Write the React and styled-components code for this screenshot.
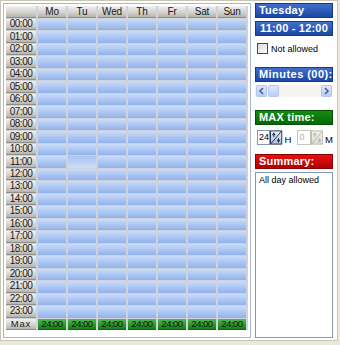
import React from 'react'
import styled, { createGlobalStyle, css } from 'styled-components'

const GlobalStyle = createGlobalStyle`
  * { box-sizing: border-box; }
  html, body { margin: 0; padding: 0; background: #ece9d8; }
  body { font-family: "Liberation Sans", Arial, sans-serif; font-size: 9px; color: #000; }
`

const days = ['Mo', 'Tu', 'Wed', 'Th', 'Fr', 'Sat', 'Sun']
const hours = Array.from({ length: 24 }, (_, i) => String(i).padStart(2, '0') + ':00')

// bar colours for the right hand captions
const tones = {
  blue: css`background: linear-gradient(#3f6fcc, #1c47a2); border-color: #143a8a;`,
  green: css`background: linear-gradient(#128c12, #046804); border-color: #035203;`,
  red: css`background: linear-gradient(#e81010, #b00000); border-color: #8a0000;`,
}

const Frame = styled.div`
  width: 338px;
  height: 341px;
  background: #fff;
  border: 1px solid #c9c6b6;
  padding: 2px;
  display: flex;
  gap: 4px;
`

const GridPanel = styled.div`
  width: 248px;
  border: 1px solid #a7b7cf;
  padding: 2px;
`

const Grid = styled.div`
  display: grid;
  grid-template-columns: 30px repeat(7, 28px);
  grid-template-rows: 12px repeat(25, minmax(0, 1fr));
  column-gap: 2px;
  row-gap: 1px;
  height: 324px;
  background: #cfd2d8;
`

const grayCell = css`
  background: linear-gradient(#f1f1ef, #d2d1cc 60%, #b5b4ae);
  border-bottom: 1px solid #8f8e88;
  color: #1a1a1a;
  display: flex;
  align-items: center;
  justify-content: center;
  line-height: 1;
  white-space: nowrap;
  overflow: hidden;
`

const HeadCell = styled.div`
  ${grayCell}
  font-size: 10px;
  letter-spacing: -0.2px;
`

const TimeCell = styled.div`
  ${grayCell}
  font-size: 10px;
  letter-spacing: -0.5px;
  ${p => p.$max && css`letter-spacing: 0.8px; font-size: 9.5px;`}
`

const Slot = styled.div`
  background: ${p => p.$selected
    ? 'linear-gradient(#a9c3ef, #c3d6f7 70%, #cddef9)'
    : 'linear-gradient(#cbdcfa, #adc7f3 50%, #90b2eb)'};
`

const MaxCell = styled.div`
  background: linear-gradient(#56b856, #2c9a2c 55%, #18801a);
  border-bottom: 1px solid #0c640c;
  color: #0a1a0a;
  display: flex;
  align-items: center;
  justify-content: center;
  line-height: 1;
  font-size: 9.5px;
  letter-spacing: -0.5px;
  overflow: hidden;
`

const Side = styled.div`
  width: 78px;
  display: flex;
  flex-direction: column;
`

const Bar = styled.div`
  height: 15px;
  margin-top: ${p => p.$top || 0}px;
  border: 1px solid;
  ${p => tones[p.$tone || 'blue']}
  color: #fff;
  font-weight: bold;
  font-size: 11px;
  letter-spacing: ${p => p.$wide ? 0.45 : 0.2}px;
  line-height: 13px;
  padding-left: 3px;
  white-space: nowrap;
  overflow: hidden;
  text-align: ${p => (p.$center ? 'center' : 'left')};
  ${p => p.$center && css`padding-left: 0;`}
`

const CheckRow = styled.label`
  display: flex;
  align-items: center;
  gap: 3px;
  margin-top: 6px;
  padding-left: 2px;
  height: 13px;
  font-size: 9px;
`

const CheckBox = styled.span`
  width: 11px;
  height: 11px;
  border: 1px solid #1c5180;
  background: linear-gradient(135deg, #dcdcd6, #fbfbf9);
`

const Scroll = styled.div`
  display: flex;
  height: 12px;
  margin-top: 3px;
  background: #f4f3ee;
  padding: 0 1px;
  gap: 1px;
`

const ScrollBtn = styled.div`
  width: 11px;
  border: 1px solid #b6c8f0;
  border-radius: 2px;
  background: linear-gradient(#dfe8fd, #b9cdf6);
  display: flex;
  align-items: center;
  justify-content: center;
  ${p => p.$push && css`margin-left: auto;`}
`

const SpinRow = styled.div`
  display: flex;
  align-items: center;
  margin-top: 4px;
  padding-left: 2px;
  height: 16px;
`

const SpinInput = styled.div`
  width: 14px;
  height: 15px;
  border: 1px solid ${p => (p.$off ? '#c9c7ba' : '#7f9db9')};
  color: ${p => (p.$off ? '#b0afa8' : '#000')};
  padding-left: 1px;
  line-height: 13px;
  font-size: 9px;
  ${p => p.$gap && css`margin-left: 6px;`}
`

const Unit = styled.span`
  margin-left: 2px;
  margin-top: 5px;
  font-size: 9.5px;
`

const Summary = styled.div`
  flex: 1;
  margin-top: 3px;
  border: 1px solid #7f9db9;
  padding: 2px 3px;
  font-size: 9px;
`

function Arrow({ dir }) {
  return (
    <svg width="7" height="8" viewBox="0 0 7 8">
      <path d={dir === 'left' ? 'M5 1 L2 4 L5 7' : 'M2 1 L5 4 L2 7'} fill="none" stroke="#4d6185" strokeWidth="1.6" />
    </svg>
  )
}

function SpinIcon({ off }) {
  const ink = off ? '#b8b7ae' : '#1e2f4e'
  const id = off ? 'sg0' : 'sg1'
  return (
    <svg width="13" height="15" viewBox="0 0 13 15">
      <defs>
        <linearGradient id={id} x1="0" y1="0" x2="0" y2="1">
          <stop offset="0" stopColor={off ? '#f2f1ec' : '#eef3fb'} />
          <stop offset="1" stopColor={off ? '#dcdbd3' : '#a9bcd9'} />
        </linearGradient>
      </defs>
      <rect x="0.5" y="0.5" width="12" height="14" fill={`url(#${id})`} stroke={ink} />
      <line x1="12" y1="1" x2="1" y2="14" stroke={ink} />
      <path d="M2 5 L4 2 L6 5 Z" fill={ink} />
      <line x1="4" y1="5" x2="4" y2="7" stroke={ink} />
      <path d="M7 10 L9 13 L11 10 Z" fill={ink} />
      <line x1="9" y1="8" x2="9" y2="10" stroke={ink} />
    </svg>
  )
}

export default function App() {
  return (
    <>
      <GlobalStyle />
      <Frame>
        <GridPanel>
          <Grid>
            <HeadCell />
            {days.map(d => <HeadCell key={d}>{d}</HeadCell>)}
            {hours.map((h, r) => (
              <React.Fragment key={h}>
                <TimeCell>{h}</TimeCell>
                {days.map((d, c) => <Slot key={d} $selected={r === 11 && c === 1} />)}
              </React.Fragment>
            ))}
            <TimeCell $max>Max</TimeCell>
            {days.map(d => <MaxCell key={d}>24:00</MaxCell>)}
          </Grid>
        </GridPanel>

        <Side>
          <Bar>Tuesday</Bar>
          <Bar $top={3} $center>11:00 - 12:00</Bar>
          <CheckRow>
            <CheckBox />
            Not allowed
          </CheckRow>
          <Bar $top={12} $wide>Minutes (00):</Bar>
          <Scroll>
            <ScrollBtn><Arrow dir="left" /></ScrollBtn>
            <ScrollBtn />
            <ScrollBtn $push><Arrow dir="right" /></ScrollBtn>
          </Scroll>
          <Bar $top={13} $tone="green">MAX time:</Bar>
          <SpinRow>
            <SpinInput>24</SpinInput>
            <SpinIcon />
            <Unit>H</Unit>
            <SpinInput $off $gap>0</SpinInput>
            <SpinIcon off />
            <Unit>M</Unit>
          </SpinRow>
          <Bar $top={9} $tone="red">Summary:</Bar>
          <Summary>All day allowed</Summary>
        </Side>
      </Frame>
    </>
  )
}
